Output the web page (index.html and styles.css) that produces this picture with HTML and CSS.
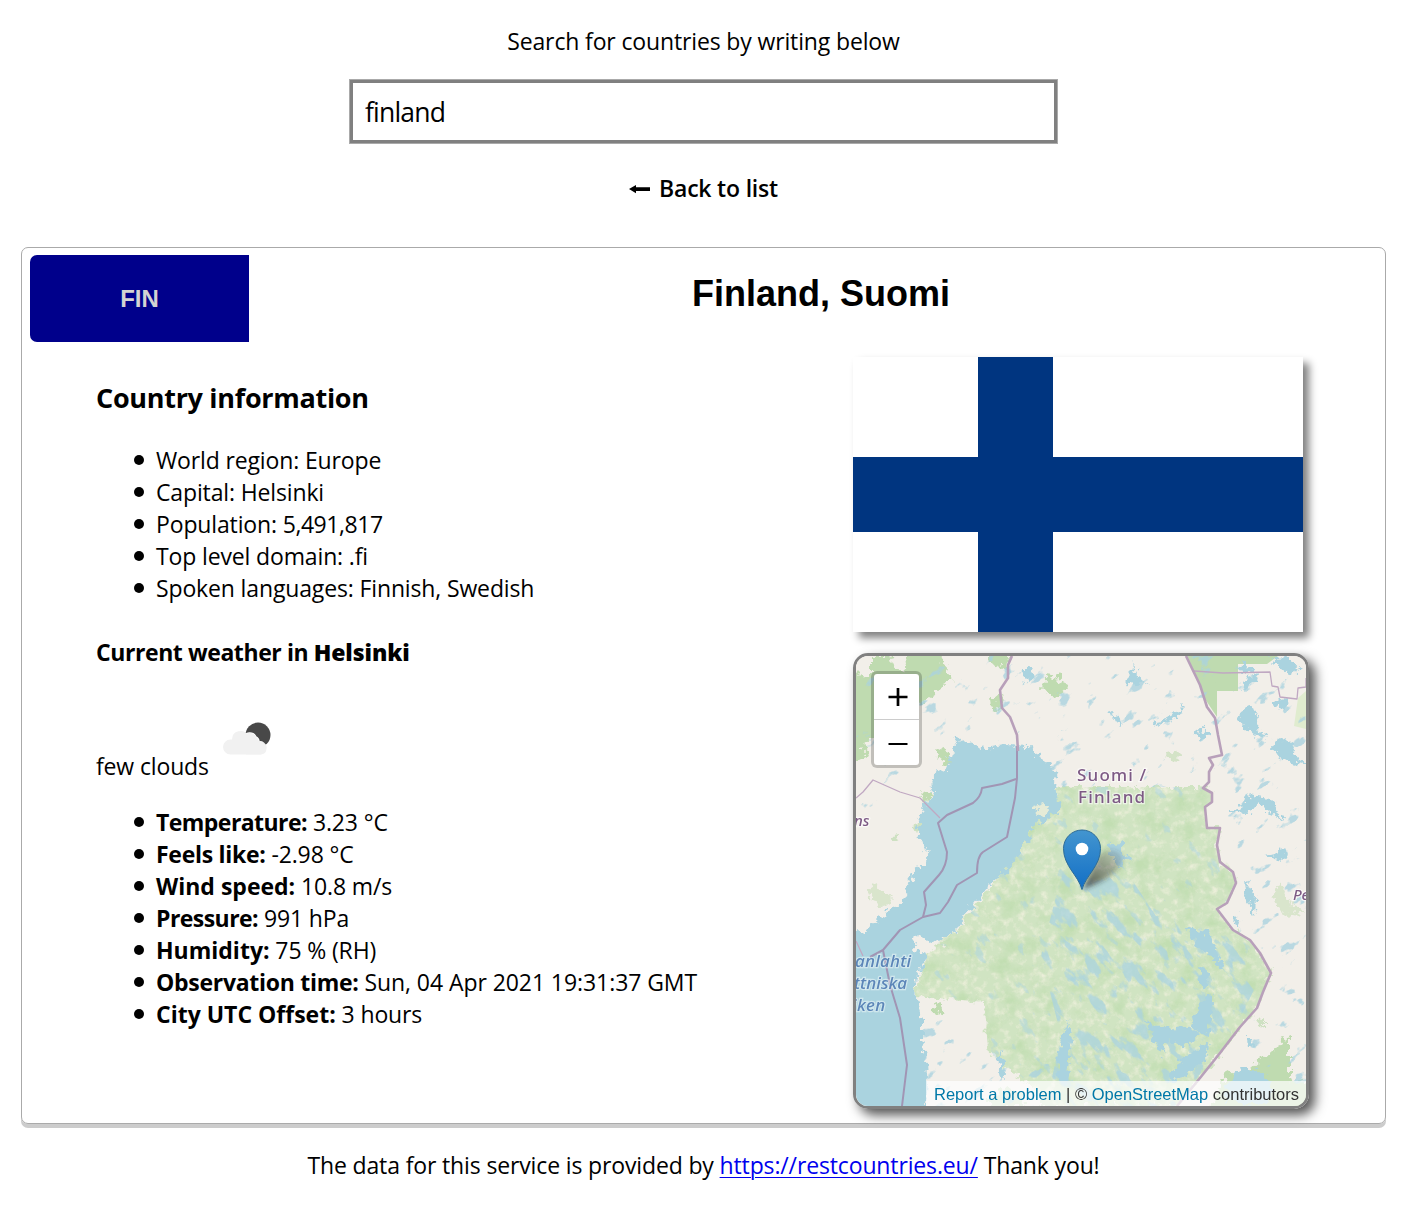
FILE: index.html
```html
<!DOCTYPE html>
<html lang="en">
<head>
<meta charset="utf-8">
<title>Countries</title>
<link rel="stylesheet" href="styles.css">
</head>
<body>
<header class="search">
  <p class="search-label">Search for countries by writing below</p>
  <input class="search-input" type="text" value="finland">
  <button class="back"><svg class="back-arrow" width="22" height="10" viewBox="0 0 22 10"><path d="M0 5 7 1V3.300H21V6.900H7V9.200Z"/></svg><span>Back to list</span></button>
</header>

<main class="card">
  <div class="card-head">
    <div class="code">FIN</div>
    <h1 class="title">Finland, Suomi</h1>
  </div>
  <div class="card-body">
    <section class="info">
      <h2 class="info-title">Country information</h2>
      <ul class="facts">
        <li>World region: Europe</li>
        <li>Capital: Helsinki</li>
        <li>Population: <span class="num">5,491,817</span></li>
        <li>Top level domain: .fi</li>
        <li>Spoken languages: Finnish, Swedish</li>
      </ul>
      <h3 class="weather-title">Current weather in <b>Helsinki</b></h3>
      <div class="weather-now">
        <span>few clouds</span>
        <svg class="weather-icon" width="75" height="75" viewBox="0 0 75 75">
          <circle cx="47" cy="30" r="12.500" fill="#484848"/>
          <path d="M32 33a7 7 0 0 1 13-1 6 6 0 0 1 3 5 6 6 0 0 1 5 4.500l-3 8H35Z" fill="#f1f1f1" stroke="#fff" stroke-width="1.500" paint-order="stroke"/>
          <path d="M19.500 49.500a7.500 7.500 0 0 1 0-15h1.500a8.500 8.500 0 0 1 16-4 7 7 0 0 1 9 6.500 6.500 6.500 0 0 1 9.500 7 6 6 0 0 1-5 5.500Z" fill="#f1f1f1"/>
        </svg>
      </div>
      <ul class="facts facts-weather">
        <li><b class="tight">Temperature:</b> 3.23 °C</li>
        <li><b>Feels like:</b> -2.98 °C</li>
        <li><b class="loose">Wind speed:</b> 10.8 m/s</li>
        <li><b class="tight">Pressure:</b> 991 hPa</li>
        <li><b class="loose">Humidity:</b> 75 % (RH)</li>
        <li><b>Observation time:</b> <span class="date">Sun, 04 Apr 2021 19:31:37 GMT</span></li>
        <li><b class="loose">City UTC Offset:</b> 3 hours</li>
      </ul>
    </section>
    <section class="media">
      <svg class="flag" viewBox="0 0 450 275"><path fill="#fff" d="M0 0h450v275H0z"/><path fill="#003580" d="M0 100h450v75H0zM125 0h75v275h-75z"/></svg>
      <div class="map">
        <svg class="map-tiles" viewBox="0 0 450 450">
          <defs>
            <filter id="rough" x="-5%" y="-5%" width="110%" height="110%"><feTurbulence type="fractalNoise" baseFrequency=".14" numOctaves="3" seed="4"/><feDisplacementMap in="SourceGraphic" scale="14" xChannelSelector="R" yChannelSelector="G"/></filter>
            <filter id="cream" color-interpolation-filters="sRGB"><feTurbulence type="fractalNoise" baseFrequency=".13" numOctaves="4" seed="8"/><feColorMatrix values="0 0 0 0 .92  0 0 0 0 .935  0 0 0 0 .85  2.500 0 0 0 -1.150"/><feComposite operator="in" in2="SourceGraphic"/></filter>
            <filter id="woods" color-interpolation-filters="sRGB"><feTurbulence type="fractalNoise" baseFrequency=".05" numOctaves="5" seed="21"/><feColorMatrix values="0 0 0 0 .76  0 0 0 0 .87  0 0 0 0 .70  0 3 0 0 -1.450"/><feComposite operator="in" in2="SourceGraphic"/></filter>
            <filter id="ponds" color-interpolation-filters="sRGB" x="0" y="0" width="100%" height="100%"><feTurbulence type="fractalNoise" baseFrequency=".045 .09" numOctaves="5" seed="13"/><feColorMatrix values="0 0 0 0 .667  0 0 0 0 .827  0 0 0 0 .875  12 0 0 0 -8.100"/></filter>
            <filter id="lakes" color-interpolation-filters="sRGB" x="0" y="0" width="100%" height="100%"><feTurbulence type="fractalNoise" baseFrequency=".035 .08" numOctaves="5" seed="5"/><feColorMatrix values="0 0 0 0 .667  0 0 0 0 .827  0 0 0 0 .875  10 0 0 0 -5.500"/></filter>
            <filter id="blur"><feGaussianBlur stdDeviation="2.500"/></filter>
            <linearGradient id="pin" x1="0" y1="0" x2="0" y2="1"><stop offset="0" stop-color="#4395cf"/><stop offset="1" stop-color="#126fc6"/></linearGradient>
            <linearGradient id="shade" x1="0" y1="1" x2=".8" y2="0"><stop offset="0" stop-color="#222" stop-opacity=".75"/><stop offset="1" stop-color="#333" stop-opacity=".15"/></linearGradient>
            <clipPath id="finland"><path d="M203 131H347L356 137V146L349 151 351 172H364L361 189 364 206 377 216 380 227 371 247 361 253 377 274 394 284 404 297 415 317 407 336 401 352 384 371 364 397 344 422 321 450H200L132 397 129 346 59 340 71 299 97 279 142 222 176 171Z"/></clipPath>
            <clipPath id="lakeland"><path d="M215 185 260 200 300 260 360 268 405 320 380 370 320 450H190L205 380 185 300 200 240Z"/></clipPath>
            <clipPath id="dry"><path d="M0 0H450V450H364L415 317 361 253 380 227 347 131H203L150 85H60L0 200ZM60 340H132V397L200 410V450H70Z"/></clipPath>
          </defs>
          <path fill="#f2efe9" d="M0 0h450v450H0z"/>
          <g fill="#bfdbb0" filter="url(#rough)">
            <path d="M14 0H34L36 9 47 16 54 -8H80L93 18 96 24 80 32 77 40 55 51 30 60 17 80 5 90 14 98 -10 110V20L14 19Z"/>
            <path d="M134 -8H154L151 14 136 8ZM189 20 205 22 211 32 202 40 188 38ZM133 43 145 38 147 55 134 50ZM80 90 94 98 93 110 82 101ZM65 133 74 140 68 149Z"/>
            <path d="M309 98 321 94 324 105 313 104Z" opacity=".6"/>
            <path d="M73 353 84 347 91 355 80 362ZM414 395 434 380V423L460 430V460H350L372 415 384 422Z"/>
            <path d="M416 235 426 229 435 250 450 255 430 260 420 250Z" opacity=".5"/>
            <path d="M10 234 20 227 28 238 37 241 28 250 16 247Z" opacity=".5"/>
            <path d="M100 190 105 188 106 196 101 196ZM35 180 43 179 42 185 37 184ZM55 170 62 168 64 176ZM135 440 150 432 165 436 170 450H135ZM185 430 205 420 215 450H185ZM400 365 408 362 408 374Z" opacity=".7"/>
          </g>
          <path fill="#bfdbb0" d="M331 0H422L411 8 382 8V35H361V61L349 43 338 15Z"/>
          <path d="M442 42 450 35V73L438 70Z" fill="#e0eccf"/>
          <g filter="url(#rough)">
            <path fill="#d0e4c2" d="M203 131H347L356 137V146L349 151 351 172H364L361 189 364 206 377 216 380 227 371 247 361 253 377 274 394 284 404 297 415 317 407 336 401 352 384 371 364 397 344 422 321 450H200L132 397 129 346 59 340 71 299 97 279 142 222 176 171Z"/>
          </g>
          <path filter="url(#cream)" d="M203 131H347L356 137 349 151 351 172H364L361 189 377 216 380 227 361 253 377 274 404 297 415 317 401 352 364 397 321 450H200L132 397 129 346 59 340 71 299 142 222Z"/>
          <path filter="url(#woods)" d="M203 131H347L356 137 349 151 351 172H364L361 189 377 216 380 227 361 253 377 274 404 297 415 317 401 352 364 397 321 450H200L132 397 129 346 59 340 71 299 142 222Z"/>
          <g clip-path="url(#dry)"><g transform="rotate(-38 225 225)"><rect x="-100" y="-100" width="650" height="650" filter="url(#ponds)" opacity=".8"/></g></g>
          <g clip-path="url(#finland)" opacity=".5"><g transform="rotate(50 225 225)"><rect x="-100" y="-100" width="650" height="650" filter="url(#ponds)"/></g></g>
          <g clip-path="url(#lakeland)" opacity=".75"><g transform="rotate(55 225 225)"><rect x="-100" y="-100" width="650" height="650" filter="url(#lakes)"/></g></g>
          <g fill="#aad3df" filter="url(#rough)">
            <path d="M101 82 111 86 127 92 151 89 171 91 181 99 194 106 201 119 199 132 205 155 194 161 176 171 174 182 161 202 142 222 134 229 117 249 104 266 97 279 74 286 61 279 57 292 71 299 61 319 59 342 66 362V386L71 402 72 426 69 460H-10V272L7 277 24 261 44 249 51 236 56 219 74 199 66 186 61 169 67 152 77 136 74 122 91 112 94 102Z"/>
            <path d="M384 54 395 48 404 62 402 72 410 83 398 78 383 66ZM412 89 425 82 436 88 441 103 455 112 435 108 420 98ZM415 3 435 2 444 12 433 20 424 12ZM384 34 390 20 404 17 395 28ZM386 5 400 16 384 18ZM417 45 430 43 431 55 419 50Z"/>
            <path d="M296 66 310 63 322 54 328 48 324 60 312 66 299 70ZM269 25 278 16 274 4 282 20 294 28 282 26 271 32ZM255 55 264 62 266 72 258 66ZM340 78 350 71 354 80 342 84ZM375 155 390 146 392 138 412 142 420 156 430 164 415 158 405 148 392 156ZM407 200 420 198 427 190 430 203Z"/>
            <path d="M329 270 350 276 360 292 368 315 354 300 340 290ZM345 345 355 338 357 358 350 380 335 370ZM290 365 310 372 330 370 345 378 330 392 312 384 308 400 298 385ZM250 190 265 188 273 205 262 210ZM344 310 354 315 352 333 342 325ZM340 395 352 385 350 405 330 420 310 425 325 405Z"/>
            <path d="M372 425 385 412 405 415 420 434 410 446H370ZM391 382 397 382 398 391 392 391ZM376 260 384 265 382 274ZM390 226 400 242 399 257 392 247ZM205 380 212 365 215 385 210 430 202 425ZM167 10 176 12 180 22 170 28ZM145 395 149 405 146 425 142 410Z"/>
          </g>
          <path d="M177 150 188 147 193 154 182 160Z" fill="#e5ebd7" filter="url(#rough)"/>
          <g fill="none" stroke-linejoin="round" stroke="#a195b4" stroke-width="2">
            <path d="M160 123 146 128 126 132Q125 141 117 147L91 159 82 167 91 196Q91 210 83 219L68 236 70 249 67 261"/>
            <path d="M161 90 161 122 159 142 151 181 127 196Q121 200 121 217L101 229 92 246 84 257 67 261 44 274 27 294 14 301M27 294 34 329 44 362 51 409 46 450"/>
            <path stroke="#c0a8c2" stroke-width="1.300" d="M0 142 7 136 17 124 44 136 64 142 84 162M338 15 367 17 414 16 416 30 422 31 424 41 441 43 442 32 450 31V22M0 285 7 300"/>
          </g>
          <g fill="none" stroke="#b8a0ba" stroke-width="2.600" stroke-linejoin="round">
            <path d="M156 0 152 9V22L144 34 146 52 154 61 161 79 162 95"/>
            <path d="M330 0 344 29 351 51 359 62 362 79 366 99 353 102 357 109 353 116V126L347 132 356 137V146L349 151 351 172H364L361 189 364 206 377 216 380 227 371 247 361 253 377 274 394 284 404 297 415 317 407 336 401 352 384 371 364 397 344 422 321 450"/>
          </g>
          <g class="place">
            <text x="221" y="125" textLength="69">Suomi /</text>
            <text x="222" y="147" textLength="67">Finland</text>
            <text x="-2" y="170" class="small">ns</text>
            <text x="437" y="244" class="small">Pe</text>
          </g>
          <g class="sea">
            <text x="-1" y="311" textLength="56">anlahti</text>
            <text x="-2" y="333" textLength="53">ttniska</text>
            <text x="-4" y="355" textLength="33">iken</text>
          </g>
          <path d="M227 233 240 204Q248 190 262 195 272 202 260 215 248 226 227 233Z" fill="url(#shade)" filter="url(#blur)"/>
          <path d="M226 233.500C222 219 207.500 210 207.500 192.500a18.500 18.500 0 0 1 37 0C244.500 210 230 219 226 233.500Z" fill="url(#pin)" stroke="#2e6c97" stroke-width="1"/>
          <circle cx="226" cy="193" r="6.300" fill="#fff"/>
        </svg>
        <div class="zoom"><button class="zoom-btn"><svg width="20" height="20" viewBox="0 0 20 20"><path d="M.5 10h19M10 1v18" stroke="#000" stroke-width="2.700"/></svg></button><button class="zoom-btn"><svg width="20" height="20" viewBox="0 0 20 20"><path d="M.5 11h19" stroke="#000" stroke-width="2"/></svg></button></div>
        <div class="credit"><a>Report a problem</a> | © <a>OpenStreetMap</a> contributors</div>
      </div>
    </section>
  </div>
</main>

<footer class="footer">The data for this service is provided by <a href="#">https://restcountries.eu/</a> Thank you!</footer>
</body>
</html>
```
FILE: styles.css
```css
* { box-sizing: border-box; }
body {
  margin: 0;
  padding: 25px 19px 0 21px;
  background: #fff;
  color: #000;
  font: 23px/32px "Open Sans", "Noto Sans", sans-serif;
  letter-spacing: -.14px;
}
button { font: inherit; letter-spacing: inherit; color: inherit; background: none; border: 0; padding: 0; }
.search { display: flex; flex-direction: column; align-items: center; }
.search-label { margin: 0 0 23px; }
.search-input {
  width: 707px; height: 63px; margin: 0; padding: 0 12px;
  border: 3px solid gray; outline: 1px solid #aaa; border-radius: 0;
  font: 26.500px "Open Sans", sans-serif; letter-spacing: -.8px; color: #000;
}
.back { display: flex; align-items: center; gap: 8px; margin-top: 29px; height: 32px; font-weight: 600; letter-spacing: -.2px; }
.back-arrow { position: relative; top: 1px; }
.card {
  margin-top: 43px; height: 877px; padding: 7px 7px 7px 8px;
  border: 1px solid #aaa; border-radius: 7px; box-shadow: 0 4px #ccc;
}
.card-head { display: grid; grid-template-columns: 219px 1fr; gap: 15px; height: 87px; }
.code {
  display: flex; align-items: center; justify-content: center;
  background: #00008b; color: #d3d3d3; border-radius: 7px 0 0 7px;
  font: bold 24px "Liberation Sans", Arial, sans-serif; letter-spacing: 0;
}
.title { margin: 0; padding-top: 18px; text-align: center; letter-spacing: 0; font: bold 36px/41px "Liberation Sans", Arial, sans-serif; }
.card-body { display: grid; grid-template-columns: 757px 1fr; padding: 15px 0 0 66px; }
.info-title { margin: 22px 0 28px; font-size: 27px; line-height: 37px; font-weight: 700; letter-spacing: -.3px; }
.facts { margin: 0; padding: 0 0 0 60px; list-style: none; }
.facts li::before {
  content: ""; display: inline-block; width: 10px; height: 10px;
  margin: 0 12px 0 -22px; border-radius: 50%; background: #000; vertical-align: 4px;
}
.facts b { letter-spacing: -.28px; }
.facts .tight { letter-spacing: -.55px; }
.facts .loose { letter-spacing: 0; }
.num { letter-spacing: -.45px; }
.date { letter-spacing: -.07px; }
.weather-title { margin: 32px 0 34px; font-size: 23px; font-weight: 700; letter-spacing: -.42px; }
.weather-title b { font-weight: 800; letter-spacing: -.1px; }
.weather-now { display: flex; align-items: flex-end; gap: 2px; height: 80px; }
.weather-icon { margin-bottom: 2px; }
.facts-weather { margin-top: 24px; }
.media { display: flex; flex-direction: column; gap: 21px; }
.flag { width: 450px; height: 275px; box-shadow: 6px 6px 8px gray; }
.map {
  position: relative; width: 456px; height: 456px; overflow: hidden;
  border: 3px solid gray; border-radius: 15px; box-shadow: 6px 6px 12px #555;
}
.map-tiles { display: block; width: 450px; height: 450px; }
.zoom {
  position: absolute; left: 15px; top: 15px; width: 51px; height: 97px;
  border: 3px solid rgba(0,0,0,.2); border-radius: 6px; background: #fff; background-clip: padding-box;
}
.zoom-btn { display: flex; align-items: center; justify-content: center; width: 45px; height: 45px; padding-left: 3px; }
.zoom-btn:first-child { height: 46px; border-bottom: 1px solid #ccc; }
.credit {
  position: absolute; right: 0; bottom: 0; padding: 1px 7px 0 8px;
  background: rgba(255,255,255,.7); color: #333; white-space: nowrap; letter-spacing: 0;
  font: 16.500px/24px "Liberation Sans", Arial, sans-serif;
}
.credit a { color: #0078a8; }
.place text, .sea text {
  font: 500 17px "Noto Sans", sans-serif; fill: #7d5a85; stroke: #fff; stroke-opacity: .6;
  stroke-width: 2.500px; paint-order: stroke;
}
.place .small { font-size: 15px; font-style: italic; }
.sea text { fill: #5b85b8; font-style: italic; stroke-opacity: .45; }
.footer { margin-top: 25px; text-align: center; }
.footer a { color: #00e; text-underline-offset: 3px; text-decoration-thickness: 1px; }
```
